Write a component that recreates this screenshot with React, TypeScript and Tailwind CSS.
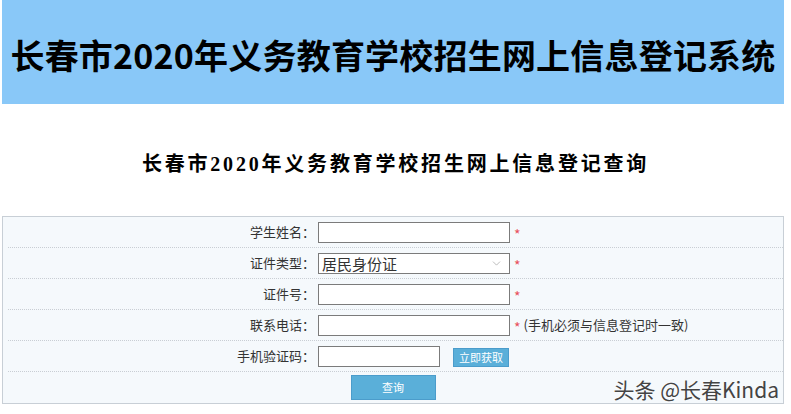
import { ChevronDown } from 'lucide-react';

const cjk = "font-['Noto_Sans_CJK_SC',sans-serif]";

function Star() {
  return <span className="ml-[4px] mt-[3px] text-[14px] leading-none text-[#e8505b]">*</span>;
}

function Row({ label, children, last }: { label: string; children: React.ReactNode; last?: boolean }) {
  return (
    <div className={last ? 'flex h-[31px] items-center' : 'flex h-[31px] items-center border-b border-dotted border-[#c9ced4] ml-[5px]'}>
      <div className="w-[307px] text-right text-[13px] text-[#333]">{label}</div>
      <div className="ml-[3px] flex items-center">{children}</div>
    </div>
  );
}

export default function App() {
  return (
    <div className={`relative h-[414px] w-[791px] overflow-hidden bg-white ${cjk}`}>
      {/* 顶部横幅 */}
      <div className="ml-[2px] flex h-[104px] w-[782px] items-center justify-center bg-[#89c8f8] pt-[6px]">
        <h1 className="text-[34px] font-bold leading-none tracking-[0.2px] text-black">
          长春市2020年义务教育学校招生网上信息登记系统
        </h1>
      </div>

      {/* 查询标题 */}
      <div className="flex h-[112px] items-start justify-center pt-[45px]">
        <h2 className="font-['Liberation_Serif','Noto_Sans_CJK_SC',serif] text-[20px] font-semibold leading-[30px] tracking-[2.8px] text-black">
          长春市2020年义务教育学校招生网上信息登记查询
        </h2>
      </div>

      {/* 表单 */}
      <div className="relative ml-[2px] w-[782px] border border-[#c8cfd6] bg-[#f5f9fc]">
        <Row label="学生姓名：">
          <input className="h-[21px] w-[192px] border border-[#7b7b7b] bg-white outline-none" />
          <Star />
        </Row>
        <Row label="证件类型：">
          <div className="flex h-[21px] w-[192px] items-center justify-between border border-[#7b7b7b] bg-white pl-[3px] pr-[6px] text-[15px] text-[#333]">
            <span className="leading-none">居民身份证</span>
            <ChevronDown className="h-[13px] w-[13px] text-[#999]" strokeWidth={1.2} />
          </div>
          <Star />
        </Row>
        <Row label="证件号：">
          <input className="h-[21px] w-[192px] border border-[#7b7b7b] bg-white outline-none" />
          <Star />
        </Row>
        <Row label="联系电话：">
          <input className="h-[21px] w-[192px] border border-[#7b7b7b] bg-white outline-none" />
          <Star />
          <span className="ml-[3px] text-[13px] text-[#333]">(手机必须与信息登记时一致)</span>
        </Row>
        <Row label="手机验证码：">
          <input className="h-[21px] w-[122px] border border-[#7b7b7b] bg-white outline-none" />
          <button className="ml-[13px] mt-[3px] h-[19px] w-[56px] border border-[#4b9ccb] bg-[#5aafd9] text-[11px] leading-none text-white">
            立即获取
          </button>
        </Row>
        <div className="flex h-[31px] items-center justify-center">
          <button className="h-[25px] w-[85px] border border-[#4b9ccb] bg-[#5aafd9] text-[11px] leading-none text-white">
            查询
          </button>
        </div>

        {/* 水印 */}
        <div className="absolute bottom-[3px] right-[4px] text-[21px] leading-none text-[#444] [text-shadow:0_0_2px_#fff]">
          头条 @长春Kinda
        </div>
      </div>
    </div>
  );
}
